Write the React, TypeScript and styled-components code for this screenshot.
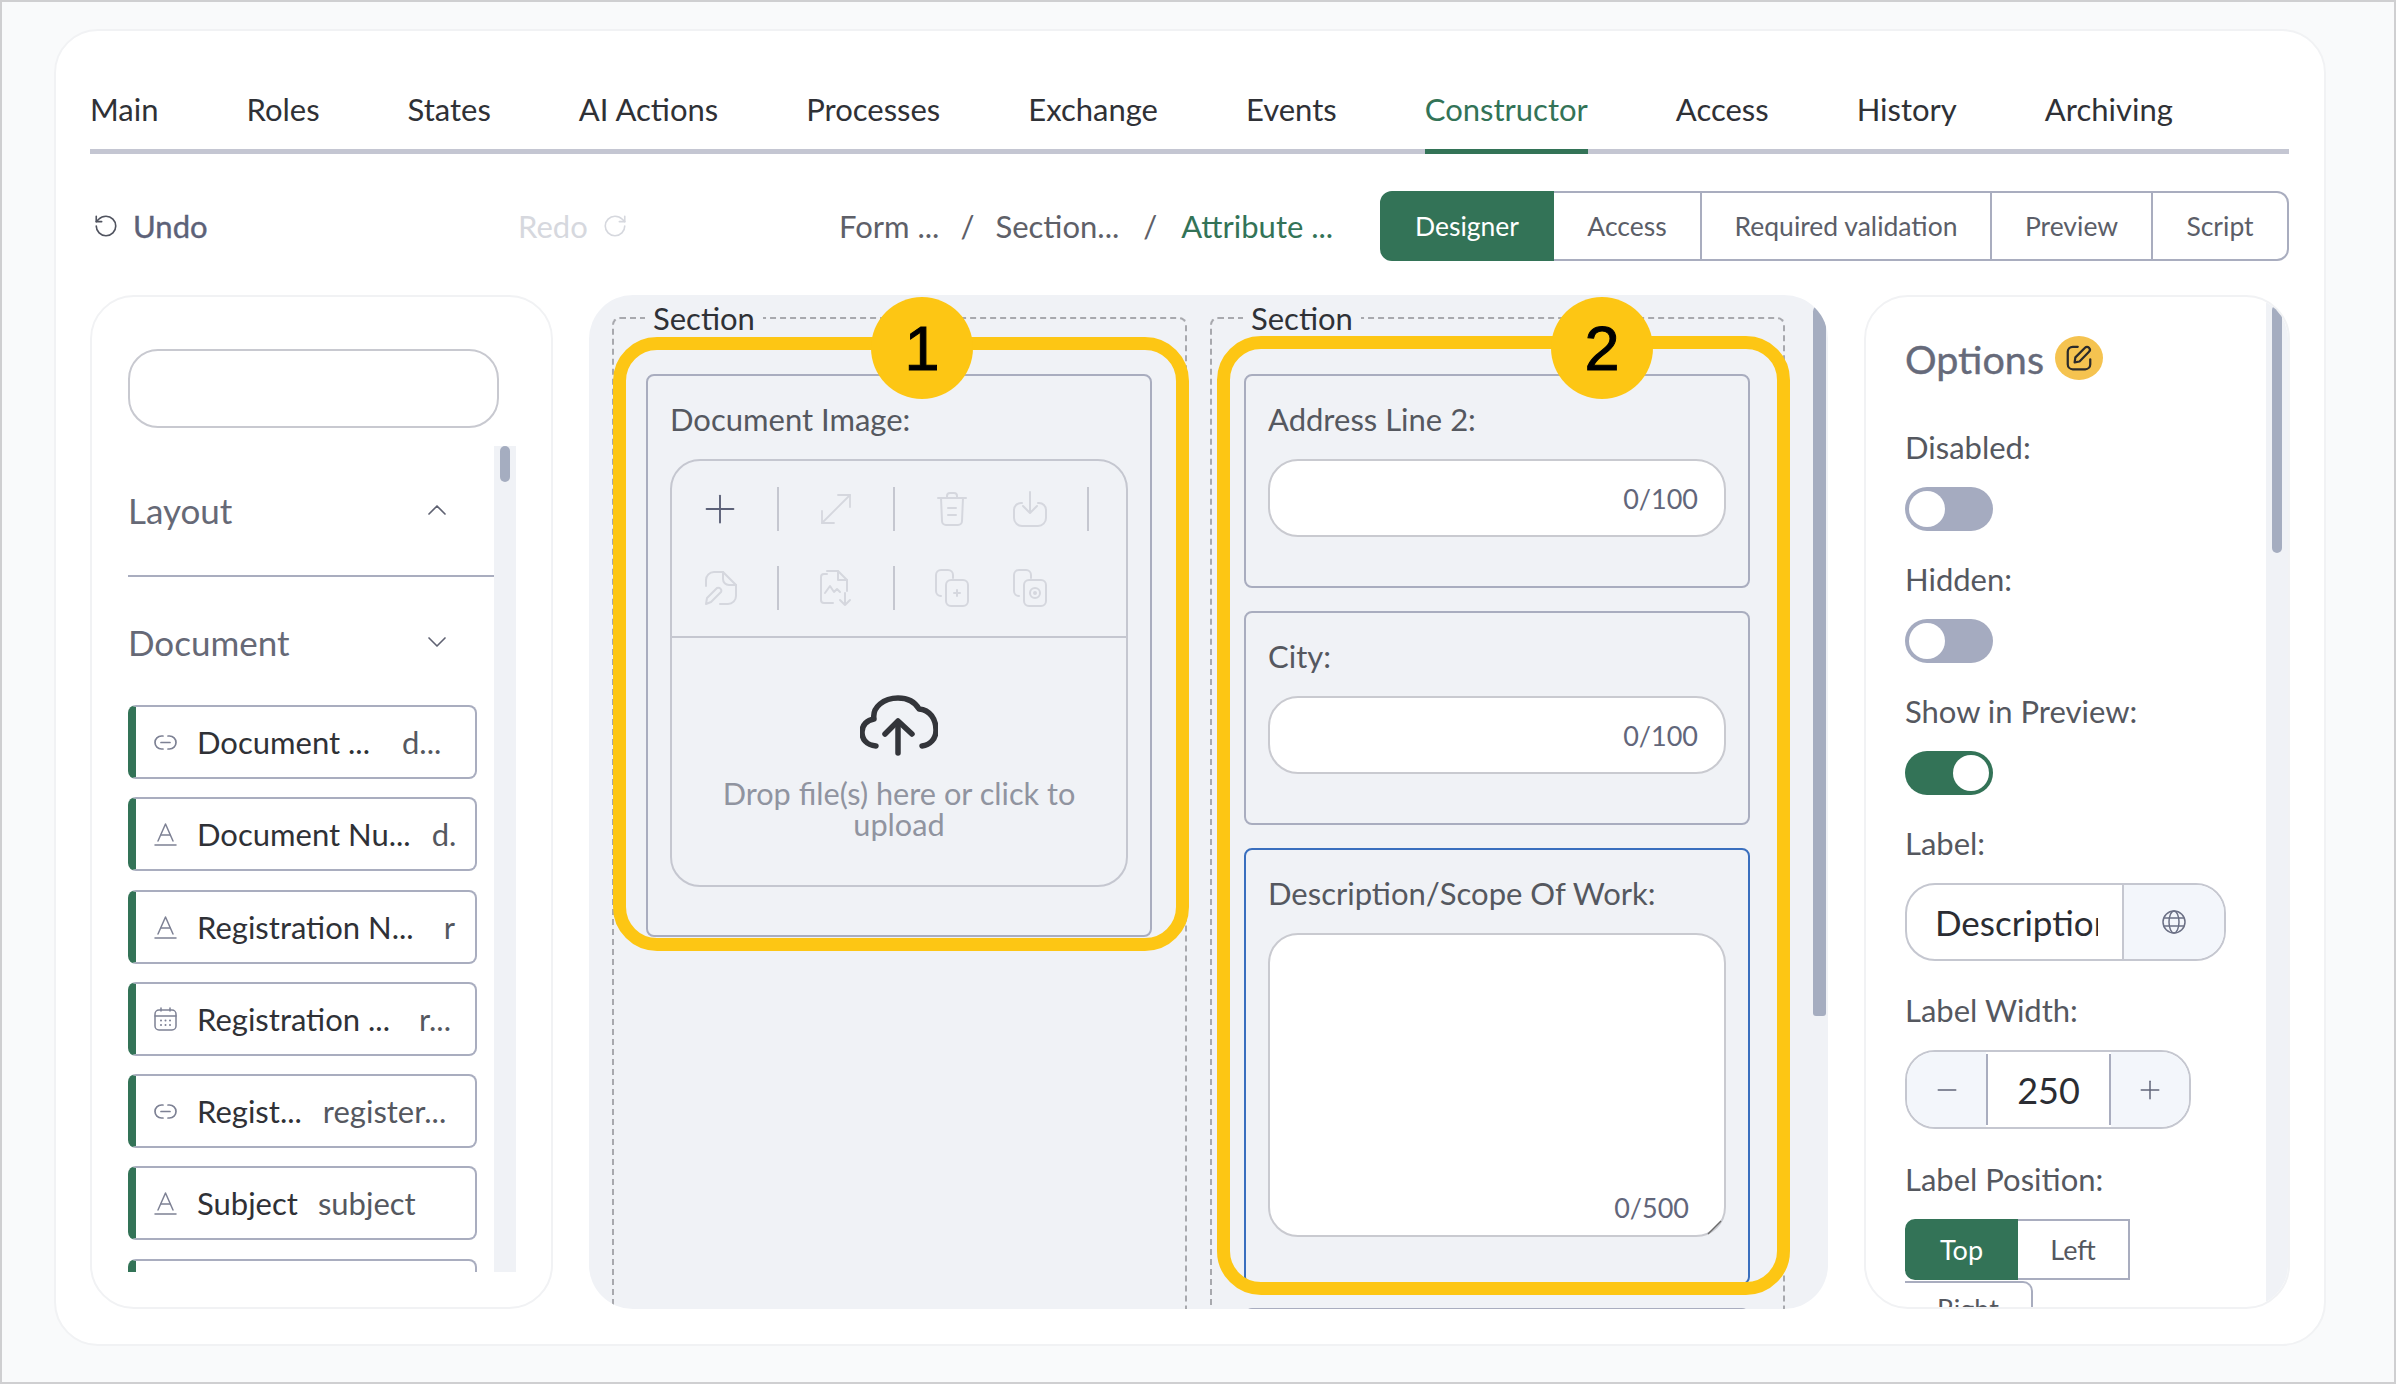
import React from "react";
import styled, { createGlobalStyle } from "styled-components";
import { RotateCcw, RotateCw, ChevronUp, ChevronDown, Plus, Minus, MoveDiagonal } from "lucide-react";

const Global = createGlobalStyle`
  html, body { margin: 0; padding: 0; background: #f9fafb; }
  * { box-sizing: border-box; }
  body { font-family: Lato, "Open Sans", sans-serif; }
`;

const GREEN = "#337357";
const LINE = "#a9adbf";

const Page = styled.div`
  width: 2396px; height: 1384px; border: 2px solid #cfcfd1; background: #f9fafb;
  padding: 27px 68px 36px 52px;
  overflow: hidden;
`;
const Card = styled.div`
  width: 2272px; height: 1317px; background: #fff; border: 2px solid #f1f2f4; border-radius: 44px;
  padding: 59px 35px 0 34px;
`;
const Tabs = styled.nav`
  display: flex; gap: 88px; border-bottom: 5px solid #c4c6d2; height: 64px;
`;
const Tab = styled.div<{ $active?: boolean }>`
  height: 64px; font-size: 31px; line-height: 38px; color: ${p => p.$active ? GREEN : "#2f3136"};
  border-bottom: 5px solid ${p => p.$active ? GREEN : "transparent"};
  white-space: nowrap;
`;
const Toolbar = styled.div`
  display: flex; align-items: center; height: 70px; margin-top: 37px;
`;
const HistoryBtn = styled.div<{ $w: number; $off?: boolean }>`
  width: ${p => p.$w}px; display: flex; align-items: center; gap: 14px; font-size: 31px;
  -webkit-text-stroke: ${p => p.$off ? 0 : 0.4}px;
  padding-left: ${p => p.$off ? 0 : 3}px;
  color: ${p => p.$off ? "#d6d8de" : "#5c6178"};
  svg { color: ${p => p.$off ? "#d6d8de" : "#50535f"}; }
`;
const Crumbs = styled.div`
  flex: 1; display: flex; align-items: center; font-size: 31px; color: #5e6068;
`;
const Slash = styled.span<{ $m: number }>`
  margin: 0 ${p => p.$m}px;
`;
const Current = styled.span`
  color: ${GREEN};
`;
const Segs = styled.div`
  display: flex; height: 70px;
`;
const Seg = styled.div<{ $active?: boolean; $w: number; $last?: boolean }>`
  width: ${p => p.$w}px; display: flex; align-items: center; justify-content: center; font-size: 26.5px;
  background: ${p => p.$active ? GREEN : "#fff"}; color: ${p => p.$active ? "#fff" : "#5b5e68"};
  border: 2px solid ${p => p.$active ? GREEN : LINE};
  border-left-width: ${p => p.$active ? 2 : 0}px;
  border-radius: ${p => p.$active ? "12px 0 0 12px" : p.$last ? "0 12px 12px 0" : "0"};
`;
const Panels = styled.div`
  display: flex; gap: 36px; margin-top: 34px; height: 1014px;
`;
const LeftPanel = styled.aside`
  width: 463px; flex: none; border: 2px solid #f1f2f4; border-radius: 44px; padding: 52px 0 0 36px; overflow: hidden;
`;
const Search = styled.div`
  width: 371px; height: 79px; border: 2px solid #c8c9d0; border-radius: 30px; background: #fff;
`;
const LeftScroll = styled.div`
  display: flex; margin-top: 18px; height: 826px;
`;
const LeftList = styled.div`
  width: 366px; overflow: hidden;
`;
const Track = styled.div<{ $w: number }>`
  width: ${p => p.$w}px; flex: none; background: #f0f2f6; padding: 0 6px;
`;
const Thumb = styled.div<{ $h: number; $t?: number }>`
  height: ${p => p.$h}px; margin-top: ${p => p.$t || 0}px; background: #a5adc0; border-radius: 6px;
`;
const GroupHead = styled.div<{ $pt: number; $pb: number; $line?: boolean }>`
  display: flex; align-items: center; justify-content: space-between; height: ${p => 44 + p.$pt + p.$pb + (p.$line ? 2 : 0)}px;
  padding: ${p => p.$pt}px 41px ${p => p.$pb}px 0; font-size: 35px; color: #666976;
  border-bottom: ${p => p.$line ? `2px solid ${LINE}` : "none"};
  svg { color: #5f6272; }
`;
const Item = styled.div`
  width: 349px; height: 74px; border: 2px solid ${LINE}; border-left: 8px solid ${GREEN}; border-radius: 8px;
  display: flex; align-items: center; padding-left: 17px; padding-right: 19px; margin-bottom: 18.25px; overflow: hidden;
  font-size: 31px; white-space: nowrap; color: #2f3136; background: #fff;
`;
const ItemIcon = styled.span`
  width: 25px; flex: none; margin-right: 19px; display: flex; justify-content: center; color: #7d8194;
`;
const ItemKey = styled.span<{ $gap: number }>`
  margin-left: ${p => p.$gap}px; color: #55585f; flex: none;
`;
const Canvas = styled.section`
  position: relative; width: 1239px; flex: none; background: #f0f2f6; border-radius: 44px; overflow: hidden;
  display: flex; gap: 23px; padding: 3px 0 0 23px;
`;
const Sec = styled.fieldset`
  width: 575px; flex: none; height: 1100px; margin: 0; padding: 0 32px; min-width: 0; border: 2px dashed #a8a9ae; border-radius: 8px;
`;
const SecTitle = styled.legend`
  padding: 0 8px; margin-left: -1px; font-size: 31px; line-height: 40px; color: #2f3136;
`;
const Field = styled.div<{ $h: number; $focus?: boolean; $top: number }>`
  width: 506px; height: ${p => p.$h}px; margin-top: ${p => p.$top}px; border: 2px solid ${p => p.$focus ? "#3a6fbe" : LINE}; border-radius: 8px;
  padding: 23px 22px 0;
`;
const FieldLabel = styled.div`
  font-size: 31px; line-height: 40px; color: #55585f; margin-bottom: 20px; white-space: nowrap;
`;
const TextInput = styled.div<{ $h: number }>`
  position: relative; height: ${p => p.$h}px; width: 458px; background: #fff; border: 2px solid #c9cad0; border-radius: 30px;
  display: flex; align-items: center; justify-content: flex-end; padding-right: 26px; font-size: 27px; color: #62667a;
`;
const Counter = styled.span`
  position: absolute; right: 35px; bottom: 9px; line-height: 36px;
`;
const Grip = styled.svg`
  position: absolute; right: 2px; bottom: 0;
`;
const Upload = styled.div`
  width: 458px; height: 428px; border: 2px solid #c5c7d0; border-radius: 30px;
`;
const IconRows = styled.div`
  height: 177px; border-bottom: 2px solid #c5c7d0; padding: 26px 0 0 24px;
`;
const IconRow = styled.div<{ $mt?: number }>`
  display: flex; align-items: center; gap: 33px; height: 44px; margin-top: ${p => p.$mt || 0}px;
`;
const Tool = styled.div<{ $off?: boolean; $tight?: boolean }>`
  width: 48px; height: 44px; display: flex; align-items: center; justify-content: center; flex: none;
  margin-left: ${p => p.$tight ? -3 : 0}px; color: ${p => p.$off ? "#d5d7de" : "#5c6178"};
`;
const ToolSep = styled.div`
  width: 2px; height: 44px; background: #c5c7d0; flex: none;
`;
const Drop = styled.div`
  height: 249px; display: flex; flex-direction: column; align-items: center; padding-top: 57px;
`;
const DropText = styled.div`
  margin-top: 22px; font-size: 30.7px; line-height: 31px; color: #9094a0; text-align: center; width: 370px;
`;
const Frame = styled.div<{ $l: number; $t: number; $w: number; $h: number }>`
  position: absolute; left: ${p => p.$l}px; top: ${p => p.$t}px; width: ${p => p.$w}px; height: ${p => p.$h}px;
  border: 13px solid #fdc614; border-radius: 44px; pointer-events: none;
`;
const Badge = styled.div<{ $l: number }>`
  position: absolute; left: ${p => p.$l}px; top: 2px; width: 102px; height: 102px; border-radius: 50%; background: #fdc614;
  display: flex; align-items: center; justify-content: center;
  font-family: "Liberation Sans", Arial, sans-serif; font-size: 63px; color: #000; -webkit-text-stroke: 1px #000;
`;
const CanvasThumb = styled.div`
  position: absolute; right: 2px; top: 10px; width: 13px; height: 711px; background: #a5adc0; border-radius: 13px 13px 6px 6px;
`;
const RightPanel = styled.aside`
  width: 426px; flex: none; border: 2px solid #f1f2f4; border-radius: 44px; display: flex; overflow: hidden;
`;
const RightBody = styled.div`
  flex: 1; min-width: 0; padding: 37px 0 0 39px;
`;
const OptionsHead = styled.div`
  display: flex; align-items: center; height: 48px; gap: 11px; font-size: 39.5px; -webkit-text-stroke: 0.4px; color: #666a7a; margin-bottom: 45px;
`;
const EditBadge = styled.span`
  width: 48px; height: 44px; border-radius: 50%; background: #f5c350; display: flex; align-items: center; justify-content: center; color: #2b2b2b;
`;
const Group = styled.div<{ $mb?: number }>`
  margin-bottom: ${p => p.$mb ?? 28}px;
`;
const OptLabel = styled.div`
  font-size: 31px; line-height: 40px; color: #55585f; margin-bottom: 20px; white-space: nowrap;
`;
const Switch = styled.div<{ $on?: boolean }>`
  width: 88px; height: 44px; border-radius: 22px; background: ${p => p.$on ? GREEN : "#a5abc0"};
  display: flex; align-items: center; padding: 0 4px; justify-content: ${p => p.$on ? "flex-end" : "flex-start"};
`;
const Knob = styled.span`
  width: 36px; height: 36px; border-radius: 50%; background: #fff;
`;
const LabelBox = styled.div`
  width: 321px; height: 78px; border: 2px solid #c5c7d0; border-radius: 30px; display: flex; overflow: hidden; background: #fff;
`;
const LabelText = styled.div`
  width: 217px; flex: none; border-right: 2px solid #c5c7d0; padding-left: 28px; font-size: 35px; line-height: 74px; color: #2b2d33;
`;
const LabelClip = styled.div`
  width: 163px; overflow: hidden; white-space: nowrap;
`;
const LabelAddon = styled.div`
  flex: 1; background: #f3f6fb; display: flex; align-items: center; justify-content: center; color: #6b7085;
`;
const Stepper = styled.div`
  width: 286px; height: 79px; border: 2px solid #c5c7d0; border-radius: 30px; display: flex; overflow: hidden;
`;
const StepBtn = styled.div<{ $w: number }>`
  width: ${p => p.$w}px; flex: none; background: #f3f6fb; display: flex; align-items: center; justify-content: center; color: #62667a;
`;
const StepValue = styled.div`
  flex: 1; display: flex; align-items: center; justify-content: center; background: #fff; font-size: 36px; color: #2b2d33;
  border-left: 2px solid ${LINE}; border-right: 2px solid ${LINE}; margin: 2px 0;
`;
const PosRow = styled.div`
  display: flex; height: 61px;
`;
const PosBtn = styled.div<{ $w: number; $active?: boolean }>`
  width: ${p => p.$w}px; font-size: 27px; display: flex; align-items: center; justify-content: center;
  background: ${p => p.$active ? GREEN : "#fff"}; color: ${p => p.$active ? "#fff" : "#55585f"};
  border: 2px solid ${p => p.$active ? GREEN : LINE}; border-left-width: ${p => p.$active ? 2 : 0}px;
  border-radius: ${p => p.$active ? "10px 0 0 10px" : "0"};
`;
const PosNext = styled.div`
  width: 128px; height: 53px; margin-top: 1px; font-size: 27px; display: flex; align-items: center; justify-content: center;
  border-top: 2px solid ${LINE}; border-right: 2px solid ${LINE}; border-radius: 0 10px 0 0; color: #55585f;
`;

const LinkIcon = () => (
  <svg width="23" height="15" viewBox="0 0 23 15" fill="none" stroke="currentColor" strokeWidth="1.7" strokeLinecap="round">
    <path d="M9 1H7.5a6.5 6.5 0 0 0 0 13H9" /><path d="M14 1h1.5a6.5 6.5 0 0 1 0 13H14" /><path d="M7 7.5h9" />
  </svg>
);
const TextIcon = () => (
  <svg width="23" height="24" viewBox="0 0 23 24" fill="none" stroke="currentColor" strokeWidth="1.5" strokeLinecap="round" strokeLinejoin="round">
    <path d="M4 19L11.5 2L19 19" /><path d="M7 13h9" /><path d="M1 23h21" />
  </svg>
);
const CalIcon = () => (
  <svg width="23" height="24" viewBox="0 0 23 24" fill="none" stroke="currentColor" strokeWidth="1.5" strokeLinecap="round">
    <rect x="1" y="3" width="21" height="20" rx="4" /><path d="M1 9h21M7 1v3M16 1v3" />
    <path d="M7 13.5h.01M11.5 13.5h.01M16 13.5h.01M7 18h.01M11.5 18h.01M16 18h.01" strokeWidth="2" />
  </svg>
);
const EditIcon = () => (
  <svg width="30" height="30" viewBox="0 0 24 24" fill="none" stroke="currentColor" strokeWidth="1.8" strokeLinecap="round" strokeLinejoin="round">
    <path d="M11 3H7a4 4 0 0 0-4 4v10a4 4 0 0 0 4 4h10a4 4 0 0 0 4-4v-4" />
    <path d="M8.5 15.5l.6-4L16.8 3.8a2.2 2.2 0 0 1 3.2 3.2l-7.6 7.8z" />
  </svg>
);
const TrashIcon = () => (
  <svg width="30" height="34" viewBox="0 0 30 34" fill="none" stroke="currentColor" strokeWidth="2" strokeLinecap="round" strokeLinejoin="round">
    <path d="M1 6h28" /><path d="M10 6V4a3 3 0 0 1 3-3h4a3 3 0 0 1 3 3v2" />
    <path d="M4 6l1 23a4 4 0 0 0 4 4h12a4 4 0 0 0 4-4l1-23" /><path d="M11 16h8M11 23h8" />
  </svg>
);
const DownloadIcon = () => (
  <svg width="34" height="36" viewBox="0 0 34 36" fill="none" stroke="currentColor" strokeWidth="2" strokeLinecap="round" strokeLinejoin="round">
    <path d="M9 12H8a7 7 0 0 0-7 7v8a8 8 0 0 0 8 8h16a8 8 0 0 0 8-8v-8a7 7 0 0 0-7-7h-1" /><path d="M17 1v20" /><path d="M10 15l7 7 7-7" />
  </svg>
);
const FileEditIcon = () => (
  <svg width="34" height="34" viewBox="0 0 34 34" fill="none" stroke="currentColor" strokeWidth="2" strokeLinecap="round" strokeLinejoin="round">
    <path d="M3 15V9a8 8 0 0 1 8-8h9l13 13v11a8 8 0 0 1-8 8H17" /><path d="M20 1v7a6 6 0 0 0 6 6h7" />
    <path d="M3 33l1-6L14 17a3 3 0 0 1 4 4L8 31z" />
  </svg>
);
const FileImageDown = () => (
  <svg width="34" height="38" viewBox="0 0 34 38" fill="none" stroke="currentColor" strokeWidth="2" strokeLinecap="round" strokeLinejoin="round">
    <path d="M14 34H5a3 3 0 0 1-3-3V8a3 3 0 0 1 3-3h3" /><path d="M8 2h11l9 9v11" /><path d="M19 2v9h9" />
    <path d="M6 24l5-7 4 6 3-3 3 3" /><path d="M26 24v12M21 31l5 5 5-5" />
  </svg>
);
const CopyBadge = ({ kind }: { kind: "plus" | "circle" }) => (
  <svg width="34" height="38" viewBox="0 0 34 38" fill="none" stroke="currentColor" strokeWidth="2" strokeLinecap="round" strokeLinejoin="round">
    <path d="M6 27a5 5 0 0 1-5-5V6a5 5 0 0 1 5-5h7a5 5 0 0 1 5 5v3" />
    <rect x="11" y="11" width="22" height="26" rx="5" />
    {kind === "plus" ? <path d="M22 21v6M19 24h6" /> : <><circle cx="22" cy="24" r="5" /><circle cx="22" cy="24" r="1" /></>}
  </svg>
);
const CloudIcon = () => (
  <svg width="78" height="61" viewBox="0 0 78 61" fill="none" stroke="#33353a" strokeWidth="5.5" strokeLinecap="round" strokeLinejoin="round">
    <path d="M16 51C6 50 2 44 2 37C2 30 7 25 14 24C12 12 24 3 38 3C48 3 55 7 59 14C70 15 76 24 76 35C76 44 70 50 62 51" />
    <path d="M38 58V27" /><path d="M25 39L38 26L52 39" />
  </svg>
);
const GlobeIcon = () => (
  <svg width="24" height="24" viewBox="0 0 24 24" fill="none" stroke="currentColor" strokeWidth="1.5">
    <circle cx="12" cy="12" r="11" /><ellipse cx="12" cy="12" rx="5" ry="11" /><path d="M2 8h20M2 16h20" />
  </svg>
);

const tabs = ["Main", "Roles", "States", "AI Actions", "Processes", "Exchange", "Events", "Constructor", "Access", "History", "Archiving"];
const segs = [
  { t: "Designer", w: 174, active: true },
  { t: "Access", w: 148 },
  { t: "Required validation", w: 290 },
  { t: "Preview", w: 161 },
  { t: "Script", w: 136, last: true },
];
const items = [
  { icon: <LinkIcon />, name: "Document ...", key: "d...", gap: 32 },
  { icon: <TextIcon />, name: "Document Nu...", key: "d.", gap: 21 },
  { icon: <TextIcon />, name: "Registration N...", key: "r", gap: 30 },
  { icon: <CalIcon />, name: "Registration ...", key: "r...", gap: 29 },
  { icon: <LinkIcon />, name: "Regist...", key: "register...", gap: 21 },
  { icon: <TextIcon />, name: "Subject", key: "subject", gap: 20 },
  { icon: null, name: "", key: "", gap: 0 },
];

export default function App() {
  return (
    <Page>
      <Global />
      <Card>
        <Tabs>
          {tabs.map(t => <Tab key={t} $active={t === "Constructor"}>{t}</Tab>)}
        </Tabs>
        <Toolbar>
          <HistoryBtn $w={428}><RotateCcw size={26} strokeWidth={1.5} />Undo</HistoryBtn>
          <HistoryBtn $w={321} $off>Redo<RotateCw size={26} strokeWidth={1.5} /></HistoryBtn>
          <Crumbs>
            <span>Form ...</span><Slash $m={21}>/</Slash><span>Section...</span><Slash $m={24}>/</Slash><Current>Attribute ...</Current>
          </Crumbs>
          <Segs>
            {segs.map(s => <Seg key={s.t} $active={s.active} $w={s.w} $last={s.last}>{s.t}</Seg>)}
          </Segs>
        </Toolbar>
        <Panels>
          <LeftPanel>
            <Search />
            <LeftScroll>
              <LeftList>
                <GroupHead $pt={42} $pb={43} $line>Layout<ChevronUp size={32} strokeWidth={1.25} /></GroupHead>
                <GroupHead $pt={43} $pb={41}>Document<ChevronDown size={32} strokeWidth={1.25} /></GroupHead>
                {items.map((it, i) => (
                  <Item key={i}>
                    <ItemIcon>{it.icon}</ItemIcon>
                    <span>{it.name}</span>
                    <ItemKey $gap={it.gap}>{it.key}</ItemKey>
                  </Item>
                ))}
              </LeftList>
              <Track $w={22}><Thumb $h={36} /></Track>
            </LeftScroll>
          </LeftPanel>

          <Canvas>
            <Sec>
              <SecTitle>Section</SecTitle>
              <Field $h={563} $top={36}>
                <FieldLabel>Document Image:</FieldLabel>
                <Upload>
                  <IconRows>
                    <IconRow>
                      <Tool><Plus size={46} strokeWidth={1} /></Tool>
                      <ToolSep />
                      <Tool $off><MoveDiagonal size={52} strokeWidth={0.9} /></Tool>
                      <ToolSep />
                      <Tool $off><TrashIcon /></Tool>
                      <Tool $off $tight><DownloadIcon /></Tool>
                      <ToolSep />
                    </IconRow>
                    <IconRow $mt={35}>
                      <Tool $off><FileEditIcon /></Tool>
                      <ToolSep />
                      <Tool $off><FileImageDown /></Tool>
                      <ToolSep />
                      <Tool $off><CopyBadge kind="plus" /></Tool>
                      <Tool $off $tight><CopyBadge kind="circle" /></Tool>
                    </IconRow>
                  </IconRows>
                  <Drop>
                    <CloudIcon />
                    <DropText>Drop file(s) here or click to upload</DropText>
                  </Drop>
                </Upload>
              </Field>
            </Sec>
            <Sec>
              <SecTitle>Section</SecTitle>
              <Field $h={214} $top={36}>
                <FieldLabel>Address Line 2:</FieldLabel>
                <TextInput $h={78}>0/100</TextInput>
              </Field>
              <Field $h={214} $top={23}>
                <FieldLabel>City:</FieldLabel>
                <TextInput $h={78}>0/100</TextInput>
              </Field>
              <Field $h={437} $top={23} $focus>
                <FieldLabel>Description/Scope Of Work:</FieldLabel>
                <TextInput $h={304}>
                  <Counter>0/500</Counter>
                  <Grip width="16" height="16" viewBox="0 0 16 16" fill="none" stroke="#6b6b6b" strokeWidth="1.5"><path d="M2 15L15 2" /></Grip>
                </TextInput>
              </Field>
              <Field $h={214} $top={23} />
            </Sec>
            <Frame $l={24} $t={42} $w={576} $h={614} />
            <Frame $l={628} $t={41} $w={573} $h={959} />
            <Badge $l={282}>1</Badge>
            <Badge $l={962}>2</Badge>
            <CanvasThumb />
          </Canvas>

          <RightPanel>
            <RightBody>
              <OptionsHead>Options<EditBadge><EditIcon /></EditBadge></OptionsHead>
              <Group><OptLabel>Disabled:</OptLabel><Switch><Knob /></Switch></Group>
              <Group><OptLabel>Hidden:</OptLabel><Switch><Knob /></Switch></Group>
              <Group><OptLabel>Show in Preview:</OptLabel><Switch $on><Knob /></Switch></Group>
              <Group $mb={29}>
                <OptLabel>Label:</OptLabel>
                <LabelBox>
                  <LabelText><LabelClip>Description</LabelClip></LabelText>
                  <LabelAddon><GlobeIcon /></LabelAddon>
                </LabelBox>
              </Group>
              <Group $mb={30}>
                <OptLabel>Label Width:</OptLabel>
                <Stepper>
                  <StepBtn $w={79}><Minus size={30} strokeWidth={1.2} /></StepBtn>
                  <StepValue>250</StepValue>
                  <StepBtn $w={78}><Plus size={30} strokeWidth={1.2} /></StepBtn>
                </Stepper>
              </Group>
              <Group $mb={0}>
                <OptLabel>Label Position:</OptLabel>
                <PosRow>
                  <PosBtn $w={113} $active>Top</PosBtn>
                  <PosBtn $w={112}>Left</PosBtn>
                </PosRow>
                <PosNext>Right</PosNext>
              </Group>
            </RightBody>
            <Track $w={22}><Thumb $h={248} $t={8} /></Track>
          </RightPanel>
        </Panels>
      </Card>
    </Page>
  );
}
